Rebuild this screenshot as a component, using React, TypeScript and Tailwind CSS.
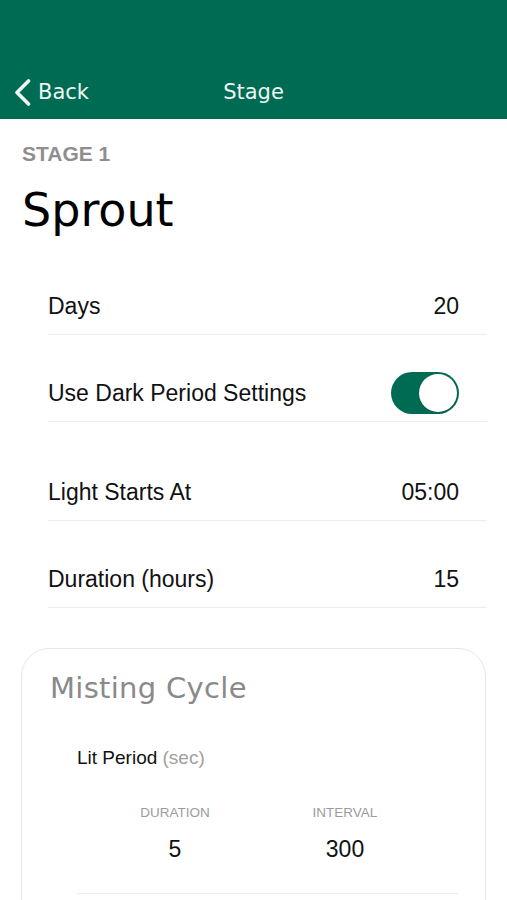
import React from "react";

const sans = "font-['Liberation_Sans',Arial,sans-serif]";
const display = "font-['DejaVu_Sans',sans-serif]";

function Row({
  label,
  children,
  className = "",
}: {
  label: string;
  children: React.ReactNode;
  className?: string;
}) {
  return (
    <div
      className={`ml-[48px] mr-[20px] flex h-[58px] items-center justify-between border-b border-[#ececec] pr-[28px] ${className}`}
    >
      <span className="text-[23px] leading-[28px] text-[#111]">{label}</span>
      {children}
    </div>
  );
}

function Toggle() {
  return (
    <div className="flex h-[42px] w-[68px] items-center justify-end rounded-full bg-[#006b53] p-[2px]">
      <div className="h-[38px] w-[38px] rounded-full bg-white shadow-sm" />
    </div>
  );
}

export default function App() {
  return (
    <div className={`min-h-[900px] w-[507px] overflow-hidden bg-white ${sans}`}>
      {/* Nav bar */}
      <header className="flex h-[119px] items-end bg-[#006b53]">
        <div className="grid h-[60px] w-full grid-cols-[1fr_auto_1fr] items-center pt-[6px]">
          <div className="flex items-center gap-[7px] pl-[14px]">
            <svg width="17" height="27" viewBox="0 0 17 27" fill="none">
              <path
                d="M14.5 2 L3 13.5 L14.5 25"
                stroke="#eef6f3"
                strokeWidth="3.6"
                strokeLinecap="round"
                strokeLinejoin="round"
              />
            </svg>
            <span className={`${display} text-[21px] leading-[28px] text-[#eef6f3]`}>
              Back
            </span>
          </div>
          <span className={`${display} text-[21px] leading-[28px] text-[#eef6f3]`}>
            Stage
          </span>
          <div />
        </div>
      </header>

      {/* Title */}
      <div className="px-[22px] pt-[23px]">
        <p className="text-[21px] font-bold leading-[24px] text-[#8e8e8e]">STAGE 1</p>
        <h1 className={`${display} mt-[16px] text-[46px] leading-[56px] text-black`}>
          Sprout
        </h1>
      </div>

      {/* Settings rows */}
      <div className="mt-[39px]">
        <Row label="Days">
          <span className="text-[23px] leading-[28px] text-[#111]">20</span>
        </Row>
        <Row label="Use Dark Period Settings" className="mt-[29px]">
          <Toggle />
        </Row>
        <Row label="Light Starts At" className="mt-[41px]">
          <span className="text-[23px] leading-[28px] text-[#111]">05:00</span>
        </Row>
        <Row label="Duration (hours)" className="mt-[29px]">
          <span className="text-[23px] leading-[28px] text-[#111]">15</span>
        </Row>
      </div>

      {/* Misting cycle card */}
      <section className="mx-[21px] mt-[40px] rounded-[28px] border border-[#e6e6e6] pb-[40px] pl-[28px] pt-[22px]">
        <h2
          className={`${display} text-[29px] leading-[34px] tracking-[0.3px] text-[#8a8a8a]`}
        >
          Misting Cycle
        </h2>
        <div className="ml-[27px] mr-[27px] mt-[41px] border-b border-[#ececec] pb-[30px]">
          <p className="text-[19px] leading-[24px] text-[#111]">
            Lit Period <span className="text-[#a0a0a0]">(sec)</span>
          </p>
          <div className="mt-[34px] grid grid-cols-[170px_170px] pl-[13px] text-center">
            <div>
              <p className="text-[13.5px] leading-[18px] text-[#9b9b9b]">DURATION</p>
              <p className="mt-[13px] text-[23px] leading-[28px] text-[#111]">5</p>
            </div>
            <div>
              <p className="text-[13.5px] leading-[18px] text-[#9b9b9b]">INTERVAL</p>
              <p className="mt-[13px] text-[23px] leading-[28px] text-[#111]">300</p>
            </div>
          </div>
        </div>
      </section>
    </div>
  );
}
